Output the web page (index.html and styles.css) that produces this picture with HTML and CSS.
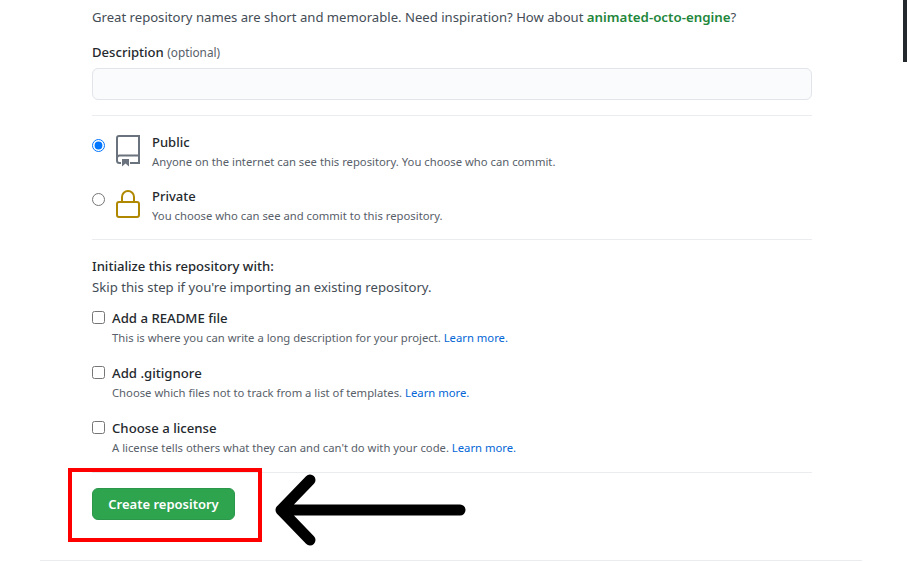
FILE: index.html
```html
<!DOCTYPE html>
<html lang="en">
<head>
<meta charset="utf-8">
<title>Create a new repository</title>
<link rel="stylesheet" href="styles.css">
</head>
<body>
<div class="scroll-mark"></div>
<main class="form">
  <p class="hint">Great repository names are short and memorable. Need inspiration? How about <a class="suggest" href="#">animated-octo-engine</a>?</p>
  <label class="field-label">Description <span class="optional">(optional)</span></label>
  <input class="text-input" type="text">
  <hr class="rule rule-a">
  <div class="vis vis-public">
    <input class="radio" type="radio" name="v" checked>
    <svg class="vis-icon" width="24" height="32" viewBox="0 0 24 32" fill="none" stroke="#6a737d" stroke-width="2"><path d="M5 28H3.500A2.500 2.500 0 0 1 1 25.500V3A2 2 0 0 1 3 1H23V28H14"/><path d="M1 23A2.500 2.500 0 0 1 3.500 20.500H23"/><path d="M6 24H13V31.500L9.500 28.500L6 31.500Z" fill="#6a737d" stroke="none"/></svg>
    <div class="vis-text"><div class="vis-title">Public</div><div class="note">Anyone on the internet can see this repository. You choose who can commit.</div></div>
  </div>
  <div class="vis vis-private">
    <input class="radio" type="radio" name="v">
    <svg class="vis-icon" width="24" height="32" viewBox="0 0 24 32" fill="none" stroke="#b08800" stroke-width="2"><rect x="1" y="13" width="22" height="15" rx="2"/><path d="M6 13V8A6 6 0 0 1 18 8V13"/></svg>
    <div class="vis-text"><div class="vis-title">Private</div><div class="note">You choose who can see and commit to this repository.</div></div>
  </div>
  <hr class="rule rule-b">
  <div class="init-title">Initialize this repository with:</div>
  <div class="init-sub">Skip this step if you're importing an existing repository.</div>
  <div class="check"><input class="box" type="checkbox"><div><div class="check-title">Add a README file</div><div class="note">This is where you can write a long description for your project. <a href="#">Learn more.</a></div></div></div>
  <div class="check"><input class="box" type="checkbox"><div><div class="check-title">Add .gitignore</div><div class="note">Choose which files not to track from a list of templates. <a href="#">Learn more.</a></div></div></div>
  <div class="check"><input class="box" type="checkbox"><div><div class="check-title">Choose a license</div><div class="note">A license tells others what they can and can't do with your code. <a href="#">Learn more.</a></div></div></div>
  <hr class="rule rule-c">
  <button class="create" type="button">Create repository</button>
</main>
<hr class="footer-rule">
<div class="red-box"></div>
<svg class="arrow" width="200" height="72" viewBox="0 0 200 72" fill="none" stroke="#000" stroke-width="11" stroke-linecap="round" stroke-linejoin="round"><path d="M186 36H7M36 6L7 36L36 66"/></svg>
</body>
</html>
```
FILE: styles.css
```css
* { box-sizing: border-box; }
html, body { margin: 0; height: 562px; overflow: hidden; background: #fff; }
body { position: relative; font-family: "Noto Sans", "Open Sans", sans-serif; color: #24292e; font-size: 13px; }
a { color: #0366d6; text-decoration: none; }
.form { width: 720px; margin-left: 92px; display: flow-root; }
.hint { margin: 7px 0 0; height: 20px; line-height: 20px; font-size: 13.12px; color: #444d56; }
.suggest { color: #22863a; font-weight: 600; font-size: 13.3px; }
.field-label { display: block; margin-top: 15px; height: 20px; line-height: 20px; font-size: 13.1px; font-weight: 500; }
.optional { font-size: 11.8px; font-weight: 400; color: #586069; }
.text-input { display: block; width: 720px; height: 32px; margin-top: 6px; background: #fafbfc; border: 1px solid #e1e4e8; border-radius: 6px; }
.rule { border: 0; border-top: 1px solid #eaecef; margin: 0; }
.rule-a { margin-top: 15px; }
.vis { display: flex; height: 54px; }
.vis-public { margin-top: 19px; }
.radio { width: 13px; height: 13px; margin: 4px 11px 0 0; flex: none; }
.vis-icon { flex: none; margin-right: 12px; }
.vis-title { font-size: 13px; font-weight: 500; line-height: 20px; margin-top: -3px; }
.note { font-size: 11.27px; line-height: 18px; color: #586069; margin-top: 1px; }
.rule-b { margin-top: -4px; }
.init-title { margin-top: 16px; font-size: 13.1px; font-weight: 500; line-height: 20px; }
.init-sub { margin-top: 1px; font-size: 13.17px; line-height: 20px; color: #444d56; }
.check { display: flex; height: 55px; }
.init-sub + .check { margin-top: 11px; }
.box { width: 13px; height: 13px; margin: 3px 7px 0 0; flex: none; }
.check-title { font-size: 13.2px; font-weight: 500; line-height: 20px; }
.rule-c { margin-top: -1px; }
.create { display: block; margin-top: 15px; width: 143px; height: 32px; padding: 0; background: #2ea44f; color: #fff; border: 1px solid #2c974b; border-radius: 6px; font: 600 13px "Noto Sans", "Open Sans", sans-serif; }
.footer-rule { position: absolute; left: 40px; top: 560px; width: 822px; margin: 0; border: 0; border-top: 1px solid #eaecef; }
.scroll-mark { position: absolute; right: 0; top: 0; width: 4px; height: 62px; background: #24292e; }
.red-box { position: absolute; left: 68px; top: 468px; width: 194px; height: 74px; border: 4px solid #f00; }
.arrow { position: absolute; left: 274px; top: 474px; }
```
